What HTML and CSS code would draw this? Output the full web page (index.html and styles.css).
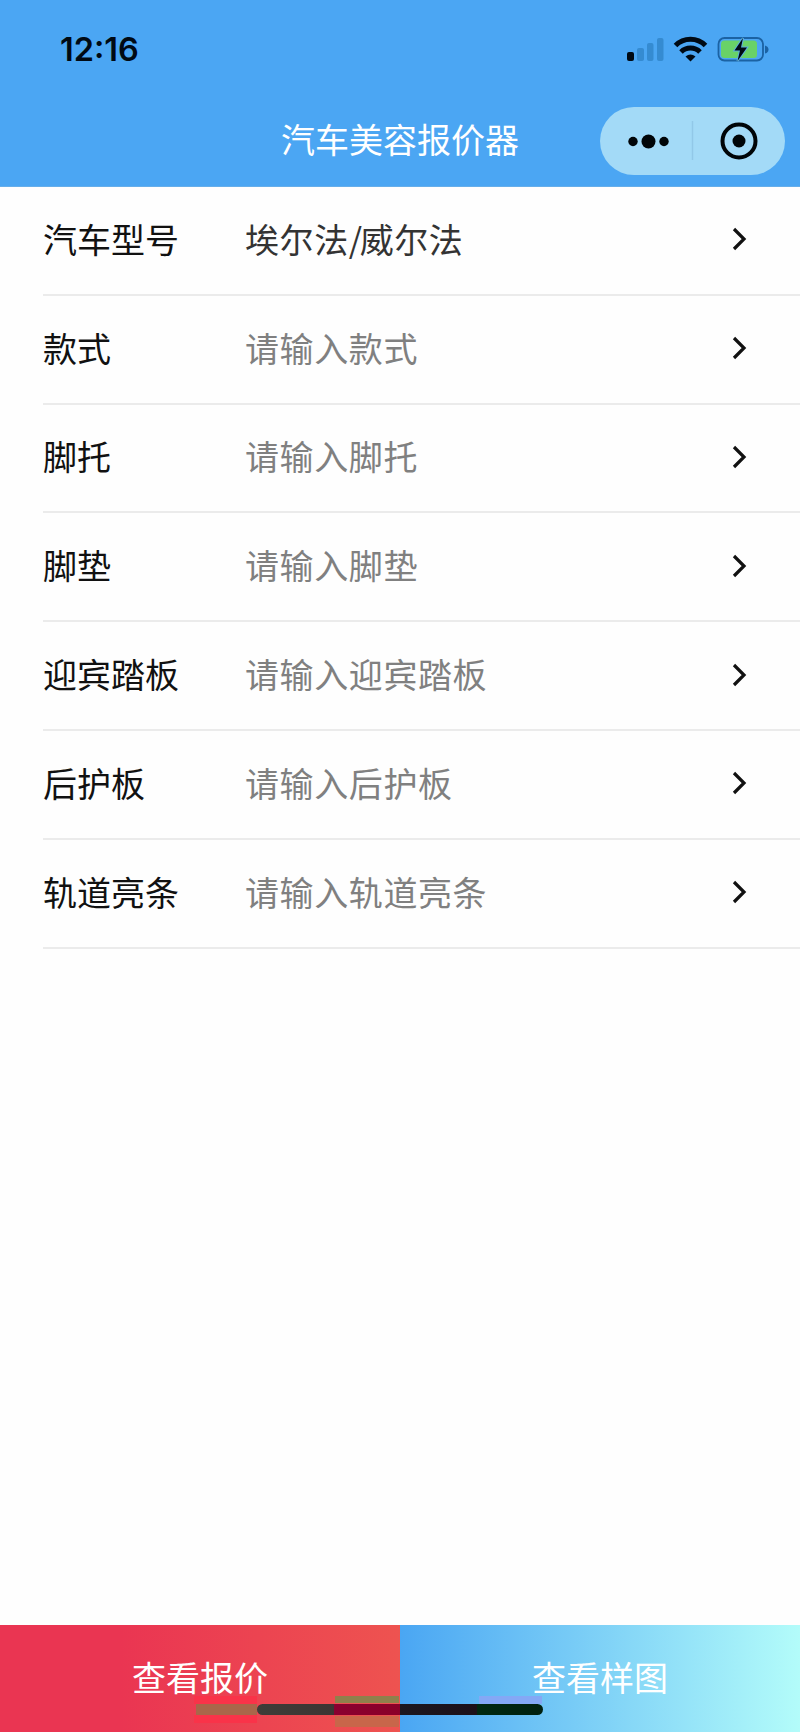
FILE: index.html
```html
<!DOCTYPE html>
<html lang="zh-CN">
<head>
  <meta charset="UTF-8" />
  <meta name="viewport" content="width=device-width, initial-scale=1.0" />
  <title>汽车美容报价器</title>
  <link rel="stylesheet" href="styles.css">
</head>
<body>
  <header class="header">
    <div class="status-bar">
      <span class="time">12:16</span>
      <svg class="status-icons" width="146" height="32" viewBox="0 0 146 32">
        <!-- signal -->
        <rect x="2" y="19" width="7" height="9" rx="2" fill="#000a14"/>
        <g fill="#358bd1">
          <rect x="12" y="15" width="7" height="13" rx="2"/>
          <rect x="22" y="10" width="6.500" height="18" rx="2"/>
          <rect x="32" y="5" width="6.500" height="23" rx="2"/>
        </g>
        <!-- wifi -->
        <g fill="none" stroke="#000a14" stroke-width="5">
          <path d="M50.500 12.500a21 21 0 0 1 30 0"/>
          <path d="M56 19a13.500 13.500 0 0 1 19 0"/>
        </g>
        <path d="M60.500 23.500q5-4 10 0L65.500 28.500z" fill="#000a14"/>
        <!-- battery -->
        <rect x="93.500" y="5" width="44.500" height="22.500" rx="6" fill="none" stroke="#1b62a3" stroke-width="1.800"/>
        <rect x="96" y="7.500" width="36" height="17.500" rx="3.500" fill="#69d267"/>
        <path d="M140 12.500q3.500 1 3.500 4t-3.500 4z" fill="#1b62a3"/>
        <path d="M118 5L109.500 17.500H115L112.500 28L122 14.500H116z" fill="#000a14" stroke="#5aaee0" stroke-width="2" paint-order="stroke"/>
      </svg>
    </div>
    <div class="nav-bar">
      <h1>汽车美容报价器</h1>
      <div class="capsule">
        <svg width="185" height="68" viewBox="0 0 185 68">
          <g fill="#000508">
            <circle cx="33" cy="34.500" r="4.700"/>
            <circle cx="48.500" cy="34.500" r="7"/>
            <circle cx="64" cy="34.500" r="4.700"/>
            <circle cx="139" cy="34" r="6.500"/>
          </g>
          <path d="M92.500 14v39" stroke="#92c8e8" stroke-width="1.500"/>
          <circle cx="139" cy="34" r="16.500" fill="none" stroke="#000508" stroke-width="4"/>
        </svg>
      </div>
    </div>
  </header>

  <main class="form">
    <div class="row">
      <span class="label">汽车型号</span>
      <span class="value">埃尔法<span class="slash">/</span>威尔法</span>
      <svg class="arrow" width="16" height="24" viewBox="0 0 16 24"><path d="M2 2l10 10L2 22"/></svg>
    </div>
    <div class="row">
      <span class="label">款式</span>
      <span class="value placeholder">请输入款式</span>
      <svg class="arrow" width="16" height="24" viewBox="0 0 16 24"><path d="M2 2l10 10L2 22"/></svg>
    </div>
    <div class="row">
      <span class="label">脚托</span>
      <span class="value placeholder">请输入脚托</span>
      <svg class="arrow" width="16" height="24" viewBox="0 0 16 24"><path d="M2 2l10 10L2 22"/></svg>
    </div>
    <div class="row">
      <span class="label">脚垫</span>
      <span class="value placeholder">请输入脚垫</span>
      <svg class="arrow" width="16" height="24" viewBox="0 0 16 24"><path d="M2 2l10 10L2 22"/></svg>
    </div>
    <div class="row">
      <span class="label">迎宾踏板</span>
      <span class="value placeholder">请输入迎宾踏板</span>
      <svg class="arrow" width="16" height="24" viewBox="0 0 16 24"><path d="M2 2l10 10L2 22"/></svg>
    </div>
    <div class="row">
      <span class="label">后护板</span>
      <span class="value placeholder">请输入后护板</span>
      <svg class="arrow" width="16" height="24" viewBox="0 0 16 24"><path d="M2 2l10 10L2 22"/></svg>
    </div>
    <div class="row">
      <span class="label">轨道亮条</span>
      <span class="value placeholder">请输入轨道亮条</span>
      <svg class="arrow" width="16" height="24" viewBox="0 0 16 24"><path d="M2 2l10 10L2 22"/></svg>
    </div>
  </main>

  <footer class="footer">
    <button type="button" class="btn btn-price">查看报价</button>
    <button type="button" class="btn btn-sample">查看样图</button>
    <svg class="home-indicator" width="350" height="36" viewBox="0 0 350 36">
      <defs>
        <linearGradient id="bar">
          <stop offset="0" stop-color="#3d3d38"/>
          <stop offset=".27" stop-color="#3d3533"/>
          <stop offset=".27" stop-color="#8a0030"/>
          <stop offset=".5" stop-color="#8a0028"/>
          <stop offset=".5" stop-color="#1c1820"/>
          <stop offset=".77" stop-color="#1c1018"/>
          <stop offset=".77" stop-color="#002810"/>
          <stop offset="1" stop-color="#002010"/>
        </linearGradient>
      </defs>
      <path d="M0 1h63v8H0zM0 20h63v8H0z" fill="#f93349"/>
      <path d="M2 9h61v11H2z" fill="#a9664a"/>
      <path d="M141 1h64v7h-64z" fill="#8f804c"/>
      <path d="M141 21h64v11h-64z" fill="#c8664a"/>
      <path d="M205 1h-1z"/>
      <path d="M285 1h63v8h-63z" fill="#84a8f5"/>
      <rect x="63" y="9" width="286" height="11" rx="5.500" fill="url(#bar)"/>
    </svg>
  </footer>
</body>
</html>
```
FILE: styles.css
```css
* {
  box-sizing: border-box;
}

body {
  margin: 0;
  min-height: 1732px;
  display: flex;
  flex-direction: column;
  background-color: #fefefe;
  color: #111;
  font-family: "Noto Sans CJK SC", sans-serif;
  font-size: 34px;
}

.header {
  height: 187px;
  background-color: #4ba6f3;
  border-bottom: 1px solid #66aeea;
}

.status-bar {
  height: 107px;
  padding: 33px 29px 0 60px;
  display: flex;
  justify-content: space-between;
  align-items: flex-start;
}

.time {
  font-family: Inter, sans-serif;
  font-size: 32.5px;
  font-weight: 600;
  line-height: 34px;
  color: #000a14;
}

.nav-bar {
  height: 68px;
  padding-right: 15px;
  display: grid;
  grid-template-columns: 200px 1fr 185px;
  align-items: center;
}

h1 {
  grid-column: 2;
  margin: 0;
  padding-bottom: 4px;
  font-size: 34px;
  font-weight: 400;
  line-height: 64px;
  text-align: center;
  color: white;
}

.capsule {
  height: 68px;
  border-radius: 34px;
  background-color: #a3daf7;
}

.capsule svg {
  display: block;
}

.form {
  flex: 1;
  padding-left: 43px;
}

.row {
  height: 108.8px;
  padding: 0 52px 2px 0;
  display: flex;
  align-items: center;
  border-bottom: 2px solid #ebebeb;
}

.label,
.value {
  padding-bottom: 2px;
}

.label {
  width: 202px;
}

.value {
  flex: 1;
  letter-spacing: 0.6px;
  color: #333;
}

.slash {
  letter-spacing: -2.5px;
}

.placeholder {
  color: #808080;
}

.arrow {
  fill: none;
  stroke: #111;
  stroke-width: 3.2;
}

.footer {
  position: relative;
  height: 107px;
  display: flex;
}

.btn {
  flex: 1;
  padding: 0 0 5px;
  border: none;
  font-family: inherit;
  font-size: 34px;
  color: white;
}

.btn-price {
  background: linear-gradient(to right, #ea3552 30%, #ee5350);
}

.btn-sample {
  background: linear-gradient(to right, #4aa6f3, #b3fcfa);
}

.home-indicator {
  position: absolute;
  left: 194px;
  bottom: 1px;
}
```
